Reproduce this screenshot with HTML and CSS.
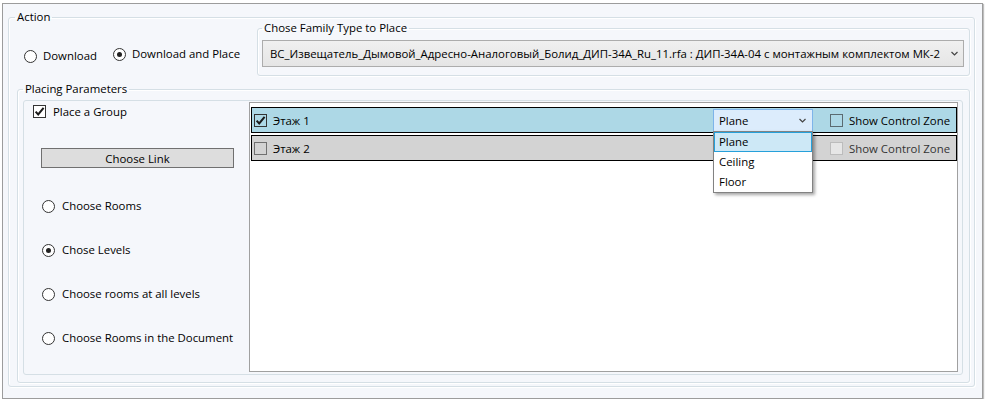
FILE: index.html
```html
<!DOCTYPE html>
<html lang="en">
<head>
<meta charset="utf-8">
<title>Place Family</title>
<link rel="stylesheet" href="styles.css">
</head>
<body>
<div class="window">
  <fieldset class="group action">
    <legend>Action</legend>
    <div class="action-top">
      <div class="mode">
        <label class="radio"><span class="rb"></span><span>Download</span></label>
        <label class="radio radio-second"><span class="rb on"></span><span>Download and Place</span></label>
      </div>
      <fieldset class="group family">
        <legend>Chose Family Type to Place</legend>
        <div class="combo combo-family">
          <span class="combo-text">ВС_Извещатель_Дымовой_Адресно-Аналоговый_Болид_ДИП-34А_Ru_11.rfa : ДИП-34А-04 с монтажным комплектом МК-2</span>
          <span class="arrow"><svg width="7" height="5" viewBox="0 0 7 5"><path d="M0.5 1 L3.5 4 L6.5 1" fill="none" stroke="#444" stroke-width="1.2"/></svg></span>
        </div>
      </fieldset>
    </div>
    <fieldset class="group placing">
      <legend>Placing Parameters</legend>
      <div class="panel">
        <div class="side">
          <label class="check-row"><span class="cb"><svg width="11" height="11" viewBox="0 0 11 11"><path d="M1.6 5.6 L4.2 8.4 L9.6 1.8" fill="none" stroke="#1a1a1a" stroke-width="2"/></svg></span><span>Place a Group</span></label>
          <div class="btn">Choose Link</div>
          <label class="radio side-radio first"><span class="rb"></span><span>Choose Rooms</span></label>
          <label class="radio side-radio"><span class="rb on"></span><span>Chose Levels</span></label>
          <label class="radio side-radio"><span class="rb"></span><span>Choose rooms at all levels</span></label>
          <label class="radio side-radio"><span class="rb"></span><span>Choose Rooms in the Document</span></label>
        </div>
        <div class="listbox">
          <div class="level level-selected">
            <span class="cb cb-row"><svg width="11" height="11" viewBox="0 0 11 11"><path d="M1.6 5.6 L4.2 8.4 L9.6 1.8" fill="none" stroke="#1a1a1a" stroke-width="2"/></svg></span>
            <span class="level-name">Этаж 1</span>
            <div class="combo combo-plane open">
              <span class="combo-text">Plane</span>
              <span class="arrow"><svg width="7" height="5" viewBox="0 0 7 5"><path d="M0.5 1 L3.5 4 L6.5 1" fill="none" stroke="#444" stroke-width="1.2"/></svg></span>
              <div class="popup">
                <div class="opt opt-active">Plane</div>
                <div class="opt">Ceiling</div>
                <div class="opt">Floor</div>
              </div>
            </div>
            <label class="zone"><span class="cb cb-zone"></span><span>Show Control Zone</span></label>
          </div>
          <div class="level level-other">
            <span class="cb cb-row cb-gray"></span>
            <span class="level-name">Этаж 2</span>
            <div class="combo-spacer"></div>
            <label class="zone zone-disabled"><span class="cb cb-disabled"></span><span>Show Control Zone</span></label>
          </div>
        </div>
      </div>
    </fieldset>
  </fieldset>
</div>
</body>
</html>
```

FILE: styles.css
```css
* { box-sizing: border-box; }

html, body {
  margin: 0;
  padding: 0;
  background: #ffffff;
}

body {
  font-family: "Open Sans", "Noto Sans", "DejaVu Sans", sans-serif;
  font-size: 11.4px;
  color: #000;
}

.window {
  margin: 3px 0 0 2px;
  width: 981px;
  height: 396px;
  border: 1px solid #9c9c9c;
  box-shadow: 1px 1px 1px rgba(0,0,0,0.25);
  background: #f5f7fb;
  padding: 7px 7px 11px 5px;
  display: flex;
  flex-direction: column;
}

.group {
  margin: 0;
  border: 1px solid #d5dfe5;
  border-radius: 3px;
  min-width: 0;
  box-shadow: inset 1px 1px 0 #ffffff, 1px 1px 0 #ffffff;
}

.group > legend {
  padding: 0 2px;
  line-height: 12px;
  height: 12px;
  font-size: 11.4px;
}

.action {
  flex: 1;
  display: flex;
  flex-direction: column;
  padding: 0 4px 3px 6px;
}

.action-top {
  display: flex;
  margin-top: -1px;
}

.mode {
  width: 242px;
  display: flex;
  align-items: flex-start;
  padding: 26px 0 0 9px;
}

.radio {
  display: inline-flex;
  align-items: center;
  height: 16px;
  line-height: 16px;
  gap: 6px;
  white-space: nowrap;
}

.radio-second {
  margin-left: 16px;
  margin-top: -2px;
}

.rb {
  width: 13px;
  height: 13px;
  border: 1px solid #333;
  border-radius: 50%;
  background: #fff;
  display: inline-flex;
  align-items: center;
  justify-content: center;
  flex: none;
}

.rb.on::after {
  content: "";
  width: 5px;
  height: 5px;
  border-radius: 50%;
  background: #222;
}

.family {
  width: 713px;
  padding: 6px 5px 8px 4px;
}

.combo {
  display: flex;
  align-items: center;
  border: 1px solid #acacac;
  background: linear-gradient(#f0f0f0, #e5e5e5);
}

.combo-family {
  height: 27px;
  padding-left: 7px;
}

.combo-text {
  flex: 1;
  overflow: hidden;
  white-space: nowrap;
}

.arrow {
  width: 12px;
  margin: 0 3px 0 2px;
  display: flex;
  justify-content: center;
  align-items: center;
  flex: none;
}

.placing {
  flex: 1;
  margin: 7px 0 0 2px;
  padding: 5px 6px 7px 5px;
  display: flex;
  flex-direction: column;
}

.panel {
  flex: 1;
  display: flex;
  border: 1px solid #d5dfe5;
  border-radius: 3px;
  padding: 1px 4px 2px 0;
}

.side {
  width: 225px;
  flex: none;
  padding: 2px 0 0 9px;
  display: flex;
  flex-direction: column;
  align-items: flex-start;
}

.check-row {
  display: inline-flex;
  align-items: center;
  gap: 7px;
  height: 14px;
}

.cb {
  width: 13px;
  height: 13px;
  border: 1px solid #333;
  background: #fff;
  display: inline-flex;
  align-items: center;
  justify-content: center;
  flex: none;
}

.btn {
  margin: 30px 0 0 8px;
  width: 193px;
  height: 20px;
  border: 1px solid #707070;
  background: #dddddd;
  display: flex;
  align-items: center;
  justify-content: center;
}

.side-radio {
  margin: 28px 0 0 9px;
  gap: 7px;
}

.side-radio.first {
  margin-top: 30px;
}

.listbox {
  flex: 1;
  background: #fff;
  border: 1px solid #a0a0a0;
  padding: 4px 0 0 1px;
}

.level {
  height: 26px;
  border: 1px solid #000;
  display: flex;
  align-items: center;
  padding: 0 0 0 2px;
  margin-bottom: 2px;
}

.level-selected { background: #add8e6; }
.level-other { background: #d3d3d3; }

.cb-row {
  background: transparent;
  border-color: #333;
}

.cb-gray { border-color: #707070; }

.level-name {
  margin-left: 6px;
  flex: 1;
}

.combo-plane {
  position: relative;
  width: 100px;
  height: 23px;
  margin: 1px 17px 0 0;
  align-self: flex-start;
  padding-left: 5px;
  border-color: #7eb4ea;
  background: #dcecfc;
}

.combo-plane .arrow {
  margin-right: 4px;
}

.combo-spacer {
  width: 117px;
  flex: none;
}

.popup {
  position: absolute;
  left: -1px;
  top: 21px;
  width: 100px;
  height: 62px;
  background: #fff;
  border: 1px solid #828282;
  box-shadow: 2px 2px 3px rgba(0,0,0,0.35);
  z-index: 5;
}

.opt {
  height: 20px;
  line-height: 18px;
  padding-left: 4px;
  border: 1px solid transparent;
}

.opt-active {
  background: #cde8f6;
  border-color: #26a0da;
}

.zone {
  width: 126px;
  flex: none;
  display: inline-flex;
  align-items: center;
  gap: 6px;
  white-space: nowrap;
}

.cb-zone {
  background: transparent;
  border-color: #5a6a70;
}

.cb-disabled {
  background: #e6e6e6;
  border-color: #bcbcbc;
}

.zone-disabled { color: #333; }
```
